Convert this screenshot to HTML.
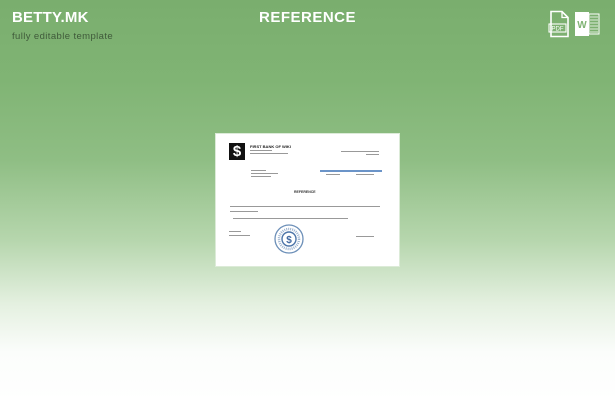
<!DOCTYPE html>
<html><head><meta charset="utf-8"><style>
*{margin:0;padding:0;box-sizing:border-box}
body{width:615px;height:400px;overflow:hidden;position:relative;font-family:"Liberation Sans",sans-serif;
background:linear-gradient(180deg,#7aae6e 0%,#80b474 20%,#8fbe84 40%,#b6d6ad 60%,#e4f0e0 76%,#fbfdfb 88%,#ffffff 100%);}
.logo{position:absolute;left:12px;top:9px;color:#fff;font-weight:bold;font-size:15px;letter-spacing:0.2px}
.sub{position:absolute;left:12px;top:31px;color:#3f5a3a;font-size:9.5px;letter-spacing:0.4px}
.ref{position:absolute;left:0;width:615px;top:9px;text-align:center;color:#fff;font-size:15px;font-weight:bold;letter-spacing:0.5px}
.doc{position:absolute;left:215px;top:133px;width:185px;height:134px;background:#fff;border:1.5px solid #dcebd8}
.t{position:absolute;font-size:3px;color:#555;white-space:nowrap}
.bar{position:absolute;height:1px;background:#999}
</style></head><body>
<div class="logo">BETTY.MK</div>
<div class="sub">fully editable template</div>
<div class="ref">REFERENCE</div>
<svg style="position:absolute;left:547px;top:10px" width="62" height="28" viewBox="0 0 62 28">
<path d="M4 1.5h11l6 6v19H4z" fill="none" stroke="#fff" stroke-width="1.6"/>
<path d="M15 1.5v6h6" fill="none" stroke="#fff" stroke-width="1.3"/>
<rect x="2" y="14" width="17" height="8" fill="none" stroke="#fff" stroke-width="1.1"/>
<text x="10.5" y="20.3" font-size="6" fill="#fff" text-anchor="middle" font-family="Liberation Sans">PDF</text>
<rect x="28" y="2" width="14" height="24" fill="#fff"/>
<text x="35" y="18" font-size="10" fill="#80b474" text-anchor="middle" font-weight="bold" font-family="Liberation Sans">W</text>
<rect x="42" y="4" width="10" height="20" fill="none" stroke="#fff" stroke-width="1"/>
<path d="M43 7h8M43 10h8M43 13h8M43 16h8M43 19h8M43 22h8" stroke="#fff" stroke-width="0.8"/>
</svg>
<div class="doc">
<div style="position:absolute;left:13px;top:9px;width:16px;height:17px;background:#111;color:#fff;font-weight:bold;font-size:15px;line-height:17px;text-align:center">$</div>
<div class="t" style="left:34px;top:10px;font-size:4px;color:#222;font-weight:bold">FIRST BANK OF WIKI</div>
<div class="bar" style="left:34px;top:16px;width:22px"></div>
<div class="bar" style="left:34px;top:19px;width:38px"></div>
<div class="bar" style="left:125px;top:17px;width:38px"></div>
<div class="bar" style="left:150px;top:20px;width:13px"></div>
<div class="bar" style="left:35px;top:36px;width:15px"></div>
<div class="bar" style="left:35px;top:39px;width:27px"></div>
<div class="bar" style="left:35px;top:42px;width:20px"></div>
<div style="position:absolute;left:104px;top:36px;width:62px;height:2px;background:#6b94c8"></div>
<div class="bar" style="left:110px;top:40px;width:14px"></div>
<div class="bar" style="left:140px;top:40px;width:18px"></div>
<div class="t" style="left:78px;top:56px;font-size:3.5px;color:#333;font-weight:bold">REFERENCE</div>
<div class="bar" style="left:14px;top:72px;width:150px"></div>
<div class="bar" style="left:14px;top:77px;width:28px"></div>
<div class="bar" style="left:17px;top:84px;width:115px"></div>
<div class="bar" style="left:13px;top:97px;width:12px"></div>
<div class="bar" style="left:13px;top:101px;width:21px"></div>
<div class="bar" style="left:140px;top:102px;width:18px"></div>
<svg style="position:absolute;left:58px;top:90px" width="30" height="30" viewBox="0 0 30 30">
<circle cx="15" cy="15" r="14" fill="none" stroke="#6c8fb8" stroke-width="1.3"/>
<circle cx="15" cy="15" r="10" fill="none" stroke="#9db3cf" stroke-width="2.5" stroke-dasharray="1 1"/>
<circle cx="15" cy="15" r="7" fill="none" stroke="#4c74a8" stroke-width="1.4"/>
<text x="15" y="19" font-size="10" fill="#3e66a0" text-anchor="middle" font-weight="bold" font-family="Liberation Sans">$</text>
</svg>
</div>
</body></html>
